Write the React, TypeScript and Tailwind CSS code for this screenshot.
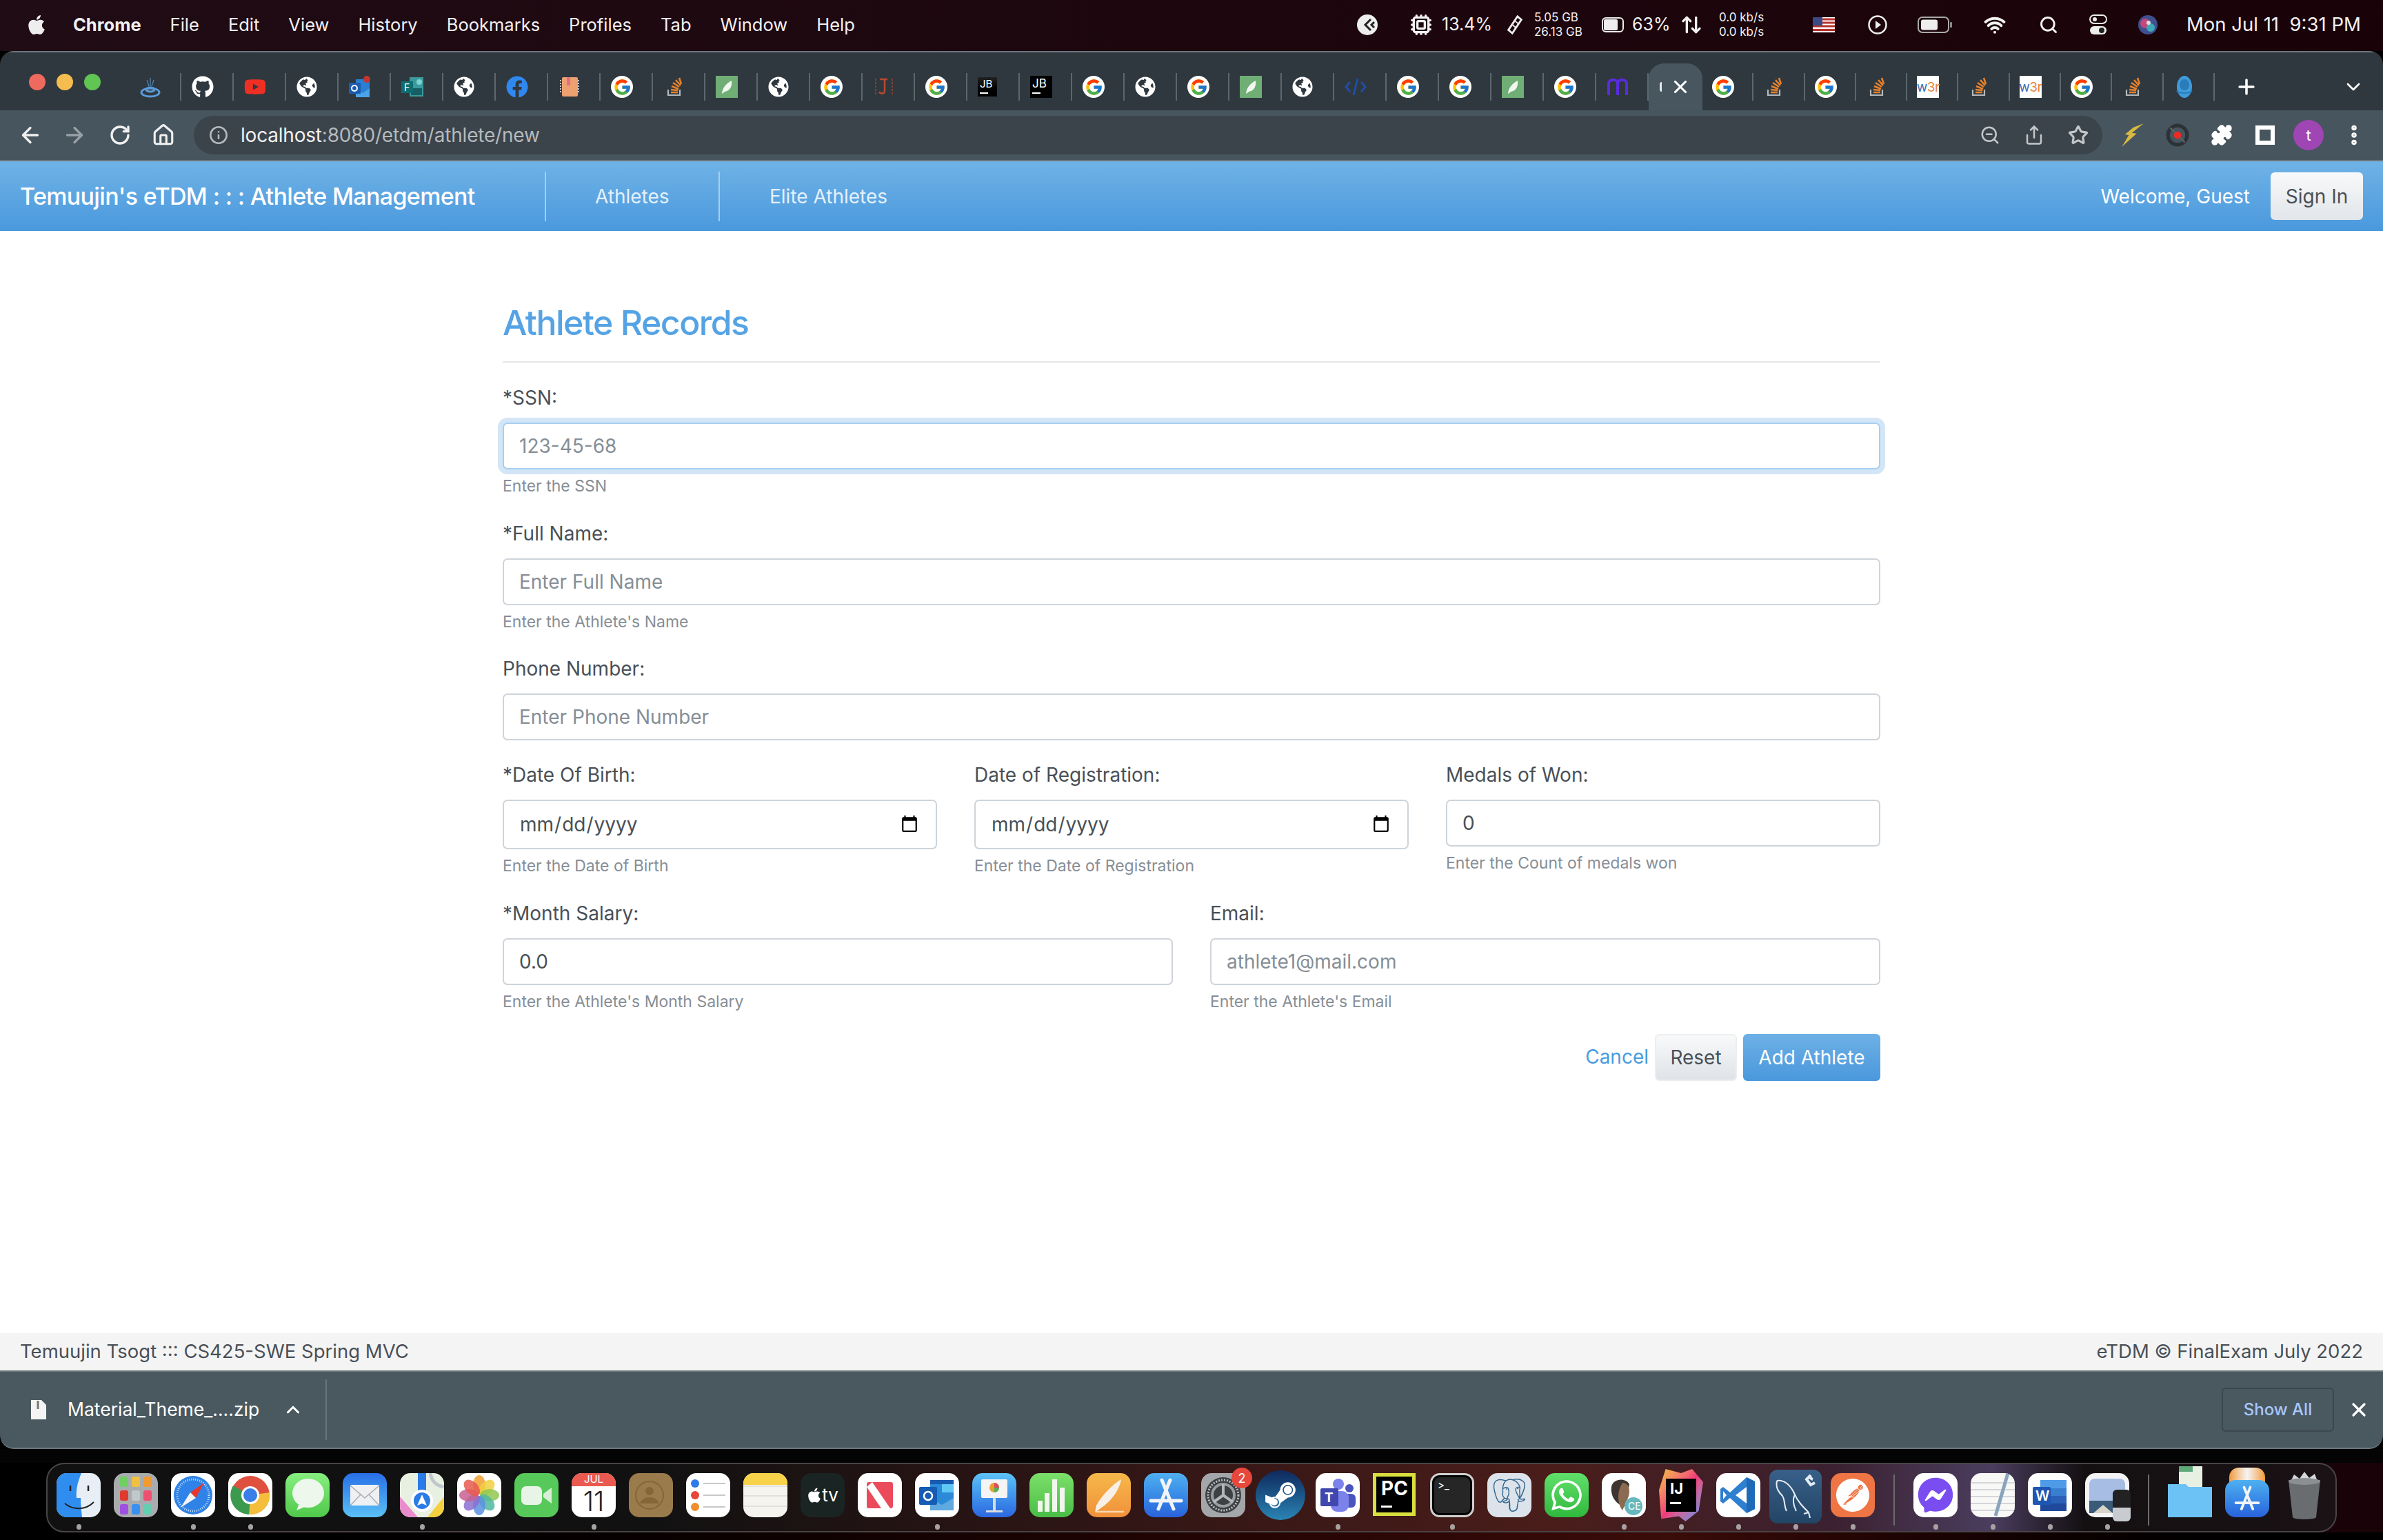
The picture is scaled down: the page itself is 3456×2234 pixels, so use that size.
import React from 'react'
import {
  ArrowLeft, ArrowRight, RotateCw, House, Info, ZoomOut, Share, Star, Puzzle, Plus, ChevronDown, ChevronUp,
  X, EllipsisVertical, Cpu, Wifi, Search, ArrowUpDown,
} from 'lucide-react'
import { FaApple, FaFacebook, FaFacebookMessenger, FaGithub, FaGlobeAmericas, FaSteamSymbol, FaWhatsapp, FaYoutube } from 'react-icons/fa'
import { FcGoogle } from 'react-icons/fc'
import { SiPostgresql, SiPostman } from 'react-icons/si'

const menuItems = ['File', 'Edit', 'View', 'History', 'Bookmarks', 'Profiles', 'Tab', 'Window', 'Help']

const tabsBefore = [
  'drop', 'github', 'youtube', 'globe', 'outlook', 'forms', 'globe', 'facebook', 'book', 'google', 'so', 'leaf', 'globe',
  'google', 'j', 'google', 'jbdim', 'jb', 'google', 'globe', 'google', 'leaf', 'globe', 'code', 'google', 'google', 'leaf',
  'google', 'm',
]
const tabsAfter = ['google', 'so', 'google', 'so', 'w3', 'so', 'w3', 'google', 'so', 'db']

const Leaf = () => (
  <svg viewBox="0 0 32 32" className="h-8 w-8">
    <rect width="32" height="32" fill="#6fae74" />
    <path d="M9 26c1-9 6-15 14-19 1 8-2 15-10 16-1 1-2 2-4 3z" fill="#f2f7f0" />
  </svg>
)

const StackOverflow = () => (
  <svg viewBox="0 0 32 32" className="h-8 w-8">
    <path d="M7 20v8h17v-8" fill="none" stroke="#b5b8ba" strokeWidth="2.2" />
    <path d="M11 24h10M11 20l10 1M12 15l10 4M14 10l9 6M18 6l7 8M23 3l3 9" stroke="#e5812b" strokeWidth="2.6" />
  </svg>
)

const W3 = () => (
  <span className="flex h-8 w-8 items-center justify-center bg-white text-[19px] leading-none tracking-tight">
    <span className="text-[#3b6fb5]">w</span>
    <span className="text-[#e8843c]">3r</span>
  </span>
)

const Favicon = ({ name }: { name: string }) => {
  if (name === 'google') {
    return (
      <span className="flex h-8 w-8 items-center justify-center rounded-full bg-white">
        <FcGoogle className="h-[27px] w-[27px]" />
      </span>
    )
  }
  if (name === 'globe') return <FaGlobeAmericas className="h-[30px] w-[30px] text-white" />
  if (name === 'github') return <FaGithub className="h-8 w-8 text-white" />
  if (name === 'youtube') return <FaYoutube className="h-8 w-8 text-[#ee3024]" />
  if (name === 'facebook') return <FaFacebook className="h-8 w-8 text-[#2f88f0]" />
  if (name === 'leaf') return <Leaf />
  if (name === 'so') return <StackOverflow />
  if (name === 'w3') return <W3 />
  if (name === 'drop') {
    return (
      <svg viewBox="0 0 32 32" className="h-8 w-8" fill="none" stroke="#5a9bd8" strokeWidth="2">
        <path d="M16 3v12M11 6l3 9M21 6l-3 9" strokeWidth="1" />
        <ellipse cx="16" cy="24" rx="13" ry="6" strokeWidth="3" />
        <ellipse cx="16" cy="20" rx="6" ry="3" strokeWidth="3" />
      </svg>
    )
  }
  if (name === 'outlook') {
    return (
      <svg viewBox="0 0 32 32" className="h-8 w-8">
        <rect x="10" y="5" width="20" height="26" fill="#2a7fd0" />
        <path d="M10 18l10 7 10-7v13H10z" fill="#4ba3e8" />
        <rect x="0" y="10" width="17" height="16" fill="#1a5cb0" />
        <circle cx="8" cy="18" r="4" fill="none" stroke="#fff" strokeWidth="2" />
        <circle cx="26" cy="5" r="5" fill="#c4352f" />
      </svg>
    )
  }
  if (name === 'forms') {
    return (
      <svg viewBox="0 0 32 32" className="h-8 w-8">
        <rect x="12" y="2" width="20" height="28" fill="#3b9a9e" />
        <circle cx="26" cy="9" r="4" fill="#7dd1cf" />
        <rect x="14" y="18" width="16" height="10" fill="#175e63" />
        <rect x="0" y="8" width="17" height="17" fill="#0e6d70" />
        <text x="4" y="22" fontSize="14" fontFamily="Inter" fill="#fff">F</text>
      </svg>
    )
  }
  if (name === 'book') {
    return (
      <svg viewBox="0 0 32 32" className="h-8 w-8">
        <rect x="5" y="2" width="23" height="28" rx="2" fill="#eda070" />
        <rect x="12" y="2" width="5" height="12" fill="#e76d8a" />
        <path d="M3 6v20M29 6v20" stroke="#c8c8c8" strokeWidth="2" strokeDasharray="2 2" />
      </svg>
    )
  }
  if (name === 'j') {
    return (
      <svg viewBox="0 0 32 32" className="h-8 w-8" fill="none" stroke="#b9492e" strokeWidth="2.5">
        <path d="M10 5h11M17 5v17c0 4-6 5-8 1" />
        <path d="M4 4v24M28 4v24" strokeWidth="1.2" strokeDasharray="3 2" />
      </svg>
    )
  }
  if (name === 'jb' || name === 'jbdim') {
    return (
      <span className={name === 'jb' ? 'flex h-8 w-8 flex-col bg-black pl-[3px] pt-[2px] text-[17px] leading-[18px] text-white' : 'flex h-[28px] w-[28px] flex-col bg-linear-to-b from-[#222] to-black pl-[3px] pt-[2px] text-[15px] leading-[16px] text-white'}>
        JB
        <span className="mt-[4px] h-[2px] w-[12px] bg-white" />
      </span>
    )
  }
  if (name === 'code') {
    return (
      <svg viewBox="0 0 32 32" className="h-8 w-8" fill="none" stroke="#1f4ea8" strokeWidth="3">
        <path d="M8 9l-6 7 6 7M24 9l6 7-6 7M19 4l-6 24" />
      </svg>
    )
  }
  if (name === 'm') {
    return (
      <svg viewBox="0 0 32 32" className="h-8 w-8" fill="none" stroke="#5a2be0" strokeWidth="4">
        <path d="M3 28V11c0-7 13-7 13 0v17M16 11c0-7 13-7 13 0v17" />
      </svg>
    )
  }
  return (
    <svg viewBox="0 0 32 32" className="h-8 w-8">
      <ellipse cx="16" cy="16" rx="11" ry="16" fill="#3f9bdc" />
      <ellipse cx="16" cy="13" rx="7" ry="8" fill="#2a7cb8" />
      <path d="M5 22c4 4 18 4 22 0" stroke="#2a7cb8" strokeWidth="2" fill="none" />
    </svg>
  )
}

const RamIcon = () => (
  <svg viewBox="0 0 24 32" className="h-[30px] w-[24px]" fill="none" stroke="#eee" strokeWidth="3">
    <path d="M16 3l6 5-14 21-6-5z" />
    <path d="M12 10l5 4M8 16l5 4" strokeWidth="2" />
  </svg>
)

const HalfBattery = () => (
  <svg viewBox="0 0 32 24" className="h-[26px] w-[32px]">
    <rect x="1" y="2" width="30" height="20" rx="5" fill="none" stroke="#eee" strokeWidth="2" />
    <rect x="3" y="4" width="20" height="16" rx="2" fill="#eee" />
  </svg>
)

const Flag = () => (
  <svg viewBox="0 0 32 22" className="h-[22px] w-[32px]">
    <rect width="32" height="22" fill="#fff" />
    <path d="M0 3h32M0 8h32M0 13h32M0 18.5h32" stroke="#b5342e" strokeWidth="3" />
    <rect width="14" height="12" fill="#3a4a85" />
  </svg>
)

const MenuBar = () => (
  <div className="flex h-[74px] shrink-0 items-center bg-linear-to-r from-[#200c15] to-[#1a0308] pb-[2px] text-[25.5px] text-[#f2f0f1]">
    <FaApple className="ml-[39px] h-[32px] w-[28px] text-[#eee]" />
    <span className="ml-[39px] font-bold">Chrome</span>
    {menuItems.map((item) => (
      <span key={item} className="ml-[42px]">{item}</span>
    ))}
    <div className="ml-auto flex items-center pr-[33px]">
      <svg viewBox="0 0 32 32" className="h-[32px] w-[32px]">
        <circle cx="16" cy="16" r="15" fill="#eee" />
        <path d="M21 8l-8 8 8 8M26 12l-4 4 4 4" fill="none" stroke="#222" strokeWidth="3" />
      </svg>
      <Cpu className="ml-[46px] h-[32px] w-[32px]" strokeWidth={2.5} />
      <span className="ml-[14px] w-[72px] text-[25px]">13.4%</span>
      <span className="ml-[22px]"><RamIcon /></span>
      <div className="ml-[16px] flex w-[78px] flex-col text-[17px] leading-[21px]">
        <span>5.05 GB</span>
        <span>26.13 GB</span>
      </div>
      <span className="ml-[20px]"><HalfBattery /></span>
      <span className="ml-[12px] w-[52px] text-[25px]">63%</span>
      <ArrowUpDown className="ml-[18px] h-[32px] w-[32px]" strokeWidth={2.5} />
      <div className="ml-[24px] flex w-[66px] flex-col text-[17px] leading-[21px]">
        <span>0.0 kb/s</span>
        <span>0.0 kb/s</span>
      </div>
      <span className="ml-[70px]"><Flag /></span>
      <svg viewBox="0 0 28 28" className="ml-[48px] h-[28px] w-[28px]">
        <circle cx="14" cy="14" r="12.5" fill="none" stroke="#eee" strokeWidth="2.5" />
        <path d="M11 8l8 6-8 6z" fill="#eee" />
      </svg>
      <svg viewBox="0 0 52 24" className="ml-[44px] h-[24px] w-[52px]">
        <rect x="1" y="1" width="44" height="22" rx="6" fill="none" stroke="#aaa" strokeWidth="2" />
        <rect x="5" y="4.5" width="24" height="15" rx="3" fill="#eee" />
        <rect x="47" y="8" width="3" height="8" rx="1" fill="#888" />
      </svg>
      <Wifi className="ml-[44px] h-[32px] w-[32px]" strokeWidth={3} />
      <Search className="ml-[48px] h-[28px] w-[28px]" strokeWidth={2.5} />
      <svg viewBox="0 0 28 32" className="ml-[44px] h-[32px] w-[28px]">
        <rect x="2" y="2" width="24" height="12" rx="6" fill="none" stroke="#eee" strokeWidth="2" />
        <circle cx="9" cy="8" r="3" fill="#eee" />
        <rect x="2" y="18" width="24" height="12" rx="6" fill="#eee" />
        <circle cx="19" cy="24" r="4" fill="#222" />
      </svg>
      <svg viewBox="0 0 28 28" className="ml-[44px] h-[28px] w-[28px]">
        <circle cx="14" cy="14" r="14" fill="#3f4f8f" />
        <circle cx="10" cy="12" r="7" fill="#c2487a" />
        <circle cx="18" cy="18" r="6" fill="#3fa8b8" />
        <circle cx="15" cy="11" r="3" fill="#ddd" />
      </svg>
      <span className="ml-[42px] w-[252px] whitespace-nowrap text-right text-[27.5px]">Mon Jul 11&nbsp;&nbsp;9:31 PM</span>
    </div>
  </div>
)

const TabStrip = () => (
  <div className="flex h-[86px] shrink-0 items-center border-t-2 border-[#6c777c] bg-[#30383f] pt-[30px] pb-[14px]">
    <div className="flex w-[187px] shrink-0 gap-[16px] pb-[14px] pl-[42px]">
      <span className="h-[24px] w-[24px] rounded-full bg-[#ee6a5f]" />
      <span className="h-[24px] w-[24px] rounded-full bg-[#f5bd4f]" />
      <span className="h-[24px] w-[24px] rounded-full bg-[#61c554]" />
    </div>
    {tabsBefore.map((name, i) => (
      <div key={i} className="flex h-[40px] w-[76px] items-center border-r-2 border-[#5c676e] pl-[15px]">
        <Favicon name={name} />
      </div>
    ))}
    <div className="mb-[-14px] flex h-[68px] w-[78px] shrink-0 items-center justify-end self-end rounded-t-[22px] bg-[#47565f] pr-[17px]">
      <span className="mr-[12px] h-[14px] w-[3px] rounded-l-full bg-[#e8e8e8]" />
      <X className="h-[30px] w-[30px] text-white" strokeWidth={2.5} />
    </div>
    {tabsAfter.map((name, i) => (
      <div key={i} className="flex h-[40px] w-[74.3px] items-center border-r-2 border-[#5c676e] pl-[14px]">
        <Favicon name={name} />
      </div>
    ))}
    <Plus className="ml-[29px] h-[34px] w-[34px] text-white" strokeWidth={2.5} />
    <ChevronDown className="ml-[122px] h-[32px] w-[32px] text-white" strokeWidth={2} />
  </div>
)

const Toolbar = () => (
  <div className="flex h-[74px] shrink-0 items-center border-b-2 border-[#6c777c] bg-[#47555e] text-[#f0f0f0]">
    <ArrowLeft className="ml-[26px] h-[36px] w-[36px]" strokeWidth={2.2} />
    <ArrowRight className="ml-[28px] h-[36px] w-[36px] text-[#98a1a7]" strokeWidth={2.2} />
    <RotateCw className="ml-[32px] h-[32px] w-[32px]" strokeWidth={2.5} />
    <House className="ml-[30px] h-[34px] w-[34px]" strokeWidth={2.2} />
    <div className="ml-[27px] flex h-[56px] w-[2768px] items-center rounded-full bg-[#3c444b] pr-[20px]">
      <Info className="ml-[22px] h-[28px] w-[28px] text-[#b4b9bd]" strokeWidth={2.2} />
      <span className="ml-[18px] text-[28px] tracking-[-0.2px]">
        localhost<span className="text-[#b4b9bd]">:8080/etdm/athlete/new</span>
      </span>
      <div className="ml-auto flex items-center gap-[34px] text-[#c3c7ca]">
        <ZoomOut className="h-[30px] w-[30px]" />
        <Share className="h-[30px] w-[30px]" />
        <Star className="h-[30px] w-[30px]" strokeWidth={2.5} />
      </div>
    </div>
    <svg viewBox="0 0 32 32" className="ml-[26px] h-[36px] w-[36px]">
      <path d="M30 1L15 13l6 1L2 31l9-15-5-1 11-9z" fill="#d8b840" />
    </svg>
    <svg viewBox="0 0 32 32" className="ml-[30px] h-[34px] w-[34px]">
      <circle cx="16" cy="16" r="13" fill="none" stroke="#2c3338" strokeWidth="5" />
      <path d="M6 6l20 20" stroke="#59636a" strokeWidth="2" />
      <circle cx="16" cy="16" r="5" fill="#ee2a24" />
    </svg>
    <Puzzle className="ml-[31px] h-[32px] w-[32px] fill-white text-white" />
    <div className="ml-[33px] h-[28px] w-[28px] border-[6px] border-white" />
    <div className="ml-[27px] flex h-[44px] w-[44px] items-center justify-center rounded-full bg-[#a046b4] text-[22px] text-white">t</div>
    <EllipsisVertical className="ml-[26px] h-[36px] w-[36px] text-white" strokeWidth={3} />
  </div>
)

const NavBar = () => (
  <div className="flex h-[101px] shrink-0 items-center bg-linear-to-b from-[#6fb3e6] to-[#4a98dd] text-[28px] text-white">
    <span className="ml-[29px] w-[761px] text-[34px] font-medium tracking-[-0.65px]">Temuujin's eTDM : : : Athlete Management</span>
    <span className="flex h-[72px] w-[254px] items-center border-x-2 border-[#a5cff0] pl-[71px] text-[#e4f0fb]">Athletes</span>
    <span className="ml-[72px] text-[#e4f0fb]">Elite Athletes</span>
    <span className="ml-auto">Welcome, Guest</span>
    <span className="ml-[30px] mr-[29px] flex h-[69px] w-[134px] items-center justify-center rounded-[6px] bg-linear-to-b from-[#f8f9fa] to-[#e2e6ea] text-[#495057]">Sign In</span>
  </div>
)

const labelClass = 'mb-[14px] block h-[43px] text-[28px] leading-[43px] text-[#495057]'
const helpClass = 'mt-[7px] block h-[34.5px] text-[23px] leading-[34.5px] text-[#868e96]'
const inputClass =
  'block h-[68px] w-full rounded-[7px] border-2 border-[#ced4da] bg-white px-[22px] text-[28px] text-[#495057] placeholder:text-[#868e96] outline-none'

type FieldProps = {
  label: string
  help?: string
  placeholder?: string
  value?: string
  type?: string
}

const Field = ({ label, help, placeholder, value, type }: FieldProps) => (
  <div>
    <label className={labelClass}>{label}</label>
    {type === 'date' ? (
      <input type="date" className={inputClass + ' !h-[72px]'} />
    ) : (
      <input type="text" readOnly placeholder={placeholder} defaultValue={value} className={inputClass} />
    )}
    {help && <small className={helpClass}>{help}</small>}
  </div>
)

const AthleteForm = () => (
  <main className="flex-1 bg-white pt-[103px]">
    <div className="mx-auto w-[1998px]">
      <h3 className="h-[88px] border-b-2 border-[#e6e7e8] text-[50px] font-medium leading-[60px] tracking-[-1.5px] text-[#55a3e4]">Athlete Records</h3>
      <div className="mt-[30px]">
        <label className={labelClass}>*SSN:</label>
        <input
          type="text"
          readOnly
          placeholder="123-45-68"
          className="block h-[68px] w-full rounded-[7px] border-2 border-[#a9cfef] bg-white px-[22px] text-[28px] shadow-[0_0_0_7px_#d3e6f7] outline-none placeholder:text-[#868e96]"
        />
        <small className={helpClass}>Enter the SSN</small>
      </div>
      <div className="mt-[30px]">
        <Field label="*Full Name:" placeholder="Enter Full Name" help="Enter the Athlete's Name" />
      </div>
      <div className="mt-[30px]">
        <Field label="Phone Number:" placeholder="Enter Phone Number" />
      </div>
      <div className="mt-[29px] grid grid-cols-3 gap-x-[54px]">
        <Field label="*Date Of Birth:" type="date" help="Enter the Date of Birth" />
        <Field label="Date of Registration:" type="date" help="Enter the Date of Registration" />
        <Field label="Medals of Won:" value="0" help="Enter the Count of medals won" />
      </div>
      <div className="mt-[30px] grid grid-cols-2 gap-x-[54px]">
        <Field label="*Month Salary:" value="0.0" help="Enter the Athlete's Month Salary" />
        <Field label="Email:" placeholder="athlete1@mail.com" help="Enter the Athlete's Email" />
      </div>
      <div className="mt-[30px] flex items-center justify-end text-[28px]">
        <a className="mb-[2px] text-[#4a9be0]">Cancel</a>
        <button className="ml-[9px] h-[68px] w-[119px] rounded-[6px] border-2 border-[#eceef0] bg-linear-to-b from-[#f8f9fa] to-[#dfe3e7] text-[#495057]">Reset</button>
        <button className="ml-[9px] h-[68px] w-[199px] rounded-[6px] bg-linear-to-b from-[#6db0e6] to-[#4a98dc] text-white">Add Athlete</button>
      </div>
    </div>
  </main>
)

const Footer = () => (
  <div className="flex h-[54px] shrink-0 items-center justify-between bg-[#f4f4f4] px-[29px] text-[27.5px] text-[#495057]">
    <span>Temuujin Tsogt ::: CS425-SWE Spring MVC</span>
    <span>eTDM © FinalExam July 2022</span>
  </div>
)

const DownloadBar = () => (
  <div className="flex h-[114px] shrink-0 items-center rounded-b-[20px] border-y-2 border-[#6c777c] bg-[#4a5860] text-white">
    <svg viewBox="0 0 22 30" className="ml-[45px] h-[30px] w-[22px]">
      <path d="M0 1h15l7 7v21H0z" fill="#f4f4f4" />
      <path d="M10 2v12" stroke="#777" strokeWidth="3" />
    </svg>
    <span className="ml-[31px] w-[324px] text-[26.5px]">Material_Theme_....zip</span>
    <ChevronUp className="-ml-[12px] h-[30px] w-[30px]" strokeWidth={2.5} />
    <div className="ml-[32px] h-[88px] w-[2px] bg-[#67747b]" />
    <button className="ml-auto h-[64px] w-[163px] rounded-[6px] border-2 border-[#3c474f] text-[24px] font-medium text-[#a8c7fa]">Show All</button>
    <X className="ml-[20px] mr-[19px] h-[32px] w-[32px]" strokeWidth={2.5} />
  </div>
)

const Tile = ({ bg, children }: { bg: string; children?: React.ReactNode }) => (
  <div className={'relative flex h-[64px] w-[64px] items-center justify-center overflow-hidden rounded-[15px] ' + bg}>{children}</div>
)

const S = ({ children }: { children: React.ReactNode }) => (
  <svg viewBox="0 0 64 64" className="h-[64px] w-[64px]">{children}</svg>
)

type DockItem = { key: string; dot?: boolean; el: React.ReactNode }

const dockGroup1: DockItem[] = [
  { key: 'finder', dot: true, el: (
    <Tile bg="bg-[#e8eef5]">
      <S>
        <path d="M0 0h36c-6 14-8 26-7 36h6c0 10 1 18 2 28H0z" fill="#2f8df0" />
        <path d="M20 18v8M46 18v8" stroke="#222" strokeWidth="2.5" />
        <path d="M12 44c12 10 30 10 42-2" fill="none" stroke="#222" strokeWidth="2" />
      </S>
    </Tile>
  ) },
  { key: 'launchpad', el: (
    <Tile bg="bg-[#a9acaf]">
      <div className="grid grid-cols-3 gap-[5px]">
        {['bg-[#6fd060]', 'bg-[#f0c040]', 'bg-[#f09a30]', 'bg-[#e03a30]', 'bg-[#c0c8cc]', 'bg-[#f05070]', 'bg-[#a050e0]', 'bg-[#3a90f0]', 'bg-[#60d0b0]'].map((c) => (
          <span key={c} className={'h-[15px] w-[12px] rounded-[3px] ' + c} />
        ))}
      </div>
    </Tile>
  ) },
  { key: 'safari', dot: true, el: (
    <Tile bg="bg-white">
      <S>
        <circle cx="32" cy="32" r="28" fill="#2f83e8" />
        <circle cx="32" cy="32" r="23" fill="none" stroke="#cfe4fb" strokeWidth="3" strokeDasharray="1 2" />
        <path d="M48 14L28 28l8 8z" fill="#e8362e" />
        <path d="M14 50l14-22 8 8z" fill="#f4f4f4" />
      </S>
    </Tile>
  ) },
  { key: 'chrome', dot: true, el: (
    <Tile bg="bg-white">
      <S>
        <circle cx="32" cy="32" r="28" fill="#e0503f" />
        <path d="M32 32L60 28a28 28 0 0 1-30 32z" fill="#f4bd3a" />
        <path d="M32 32L30 60A28 28 0 0 1 7 18z" fill="#3c9a4f" />
        <circle cx="32" cy="32" r="13" fill="#fff" />
        <circle cx="32" cy="32" r="10" fill="#3a7ee8" />
      </S>
    </Tile>
  ) },
  { key: 'messages', el: (
    <Tile bg="bg-linear-to-b from-[#86ef7f] to-[#4fc94a]">
      <S>
        <ellipse cx="33" cy="29" rx="23" ry="21" fill="#eef7ec" />
        <path d="M20 44l-4 10 14-6z" fill="#eef7ec" />
      </S>
    </Tile>
  ) },
  { key: 'mail', el: (
    <Tile bg="bg-linear-to-b from-[#2a6fe8] to-[#5cc0f5]">
      <S>
        <rect x="11" y="17" width="42" height="30" rx="2" fill="#eef0f2" />
        <path d="M11 18l21 18 21-18M11 47l15-16M53 47L38 31" fill="none" stroke="#a8adb2" strokeWidth="1.5" />
      </S>
    </Tile>
  ) },
  { key: 'maps', dot: true, el: (
    <Tile bg="bg-[#e8f0e2]">
      <S>
        <path d="M0 34l26 30H0z" fill="#e88ccc" />
        <path d="M40 64l24-30v30z" fill="#f4d040" />
        <rect x="26" y="0" width="12" height="30" fill="#2a7ae8" />
        <path d="M44 0c2 12 8 18 20 20" fill="none" stroke="#c0c6cc" strokeWidth="5" />
        <circle cx="32" cy="40" r="16" fill="#fff" />
        <circle cx="32" cy="40" r="12" fill="#2a7ae8" />
        <path d="M32 31l7 16-7-3-7 3z" fill="#fff" />
      </S>
    </Tile>
  ) },
  { key: 'photos', el: (
    <Tile bg="bg-white">
      <S>
        {[['#f0a030', 0], ['#f0d040', 45], ['#90c850', 90], ['#50b8a0', 135], ['#5a90e0', 180], ['#8a70d0', 225], ['#c86090', 270], ['#e85a50', 315]].map(([c, r]) => (
          <ellipse key={String(r)} cx="32" cy="17" rx="9" ry="14" fill={String(c)} opacity="0.85" transform={'rotate(' + r + ' 32 32)'} />
        ))}
      </S>
    </Tile>
  ) },
  { key: 'facetime', el: (
    <Tile bg="bg-[#57c95a]">
      <S>
        <rect x="10" y="19" width="30" height="27" rx="7" fill="#e8f5e6" />
        <path d="M42 30l12-9v23l-12-9z" fill="#d8eed6" />
      </S>
    </Tile>
  ) },
  { key: 'calendar', dot: true, el: (
    <Tile bg="bg-white">
      <div className="flex h-full w-full flex-col items-center">
        <span className="flex h-[19px] w-full items-center justify-center bg-[#ea5a50] text-[15px] text-white">JUL</span>
        <span className="text-[39px] font-light leading-[44px] text-[#222]">11</span>
      </div>
    </Tile>
  ) },
  { key: 'contacts', el: (
    <Tile bg="bg-[#9a7b4c]">
      <S>
        <circle cx="30" cy="32" r="20" fill="none" stroke="#846638" strokeWidth="2" />
        <circle cx="30" cy="26" r="6" fill="#846638" />
        <path d="M16 44c4-12 24-12 28 0" fill="#846638" />
      </S>
    </Tile>
  ) },
  { key: 'reminders', el: (
    <Tile bg="bg-white">
      <S>
        <circle cx="13" cy="15" r="6" fill="#2f7be8" />
        <circle cx="13" cy="32" r="6" fill="#e8443a" />
        <circle cx="13" cy="49" r="6" fill="#ef8e2a" />
        <path d="M25 15h32M25 32h32M25 49h32" stroke="#c8c8c8" strokeWidth="2" />
      </S>
    </Tile>
  ) },
  { key: 'notes', el: (
    <Tile bg="bg-[#f5f4ef]">
      <S>
        <rect width="64" height="17" fill="#f8d34a" />
        <path d="M0 19h64M0 33h64M0 48h64" stroke="#dcdbd4" strokeWidth="1.5" />
      </S>
    </Tile>
  ) },
  { key: 'tv', el: (
    <Tile bg="bg-[#1a2423]">
      <FaApple className="h-[24px] w-[22px] text-white" />
      <span className="text-[26px] leading-none text-white">tv</span>
    </Tile>
  ) },
  { key: 'news', el: (
    <Tile bg="bg-white">
      <S>
        <rect x="13" y="13" width="38" height="38" rx="3" fill="#ea4a5c" />
        <path d="M21 13l26 38H34L13 20z" fill="#fff" />
      </S>
    </Tile>
  ) },
  { key: 'outlook', dot: true, el: (
    <Tile bg="bg-white">
      <S>
        <rect x="22" y="10" width="34" height="44" fill="#2a8ad8" />
        <rect x="39" y="10" width="17" height="18" fill="#60c8f5" />
        <rect x="22" y="10" width="34" height="6" fill="#1a5ab0" />
        <path d="M22 36l17 10 17-10v18H22z" fill="#60a8e0" />
        <rect x="6" y="20" width="26" height="26" rx="2" fill="#155cb4" />
        <circle cx="19" cy="33" r="6" fill="none" stroke="#fff" strokeWidth="2.5" />
      </S>
    </Tile>
  ) },
  { key: 'keynote', el: (
    <Tile bg="bg-linear-to-b from-[#5dc2f8] to-[#2d66e0]">
      <S>
        <path d="M30 34h4v20h-4zM20 54h24v3H20z" fill="#d8dde2" />
        <rect x="13" y="9" width="38" height="27" rx="2" fill="#f4f4f4" />
        <circle cx="32" cy="21" r="7" fill="#e8a030" />
        <path d="M32 21V14a7 7 0 0 1 7 7z" fill="#e04a5a" />
        <path d="M32 21h7a7 7 0 0 1-7 7z" fill="#50b060" />
      </S>
    </Tile>
  ) },
  { key: 'numbers', el: (
    <Tile bg="bg-linear-to-b from-[#7be06a] to-[#49bd47]">
      <S>
        <rect x="12" y="40" width="7" height="16" fill="#f2f7ee" />
        <rect x="22" y="29" width="7" height="27" fill="#f2f7ee" />
        <rect x="33" y="9" width="7" height="47" fill="#f2f7ee" />
        <rect x="44" y="21" width="7" height="35" fill="#f2f7ee" />
      </S>
    </Tile>
  ) },
  { key: 'pages', el: (
    <Tile bg="bg-linear-to-b from-[#f6b84a] to-[#f0913a]">
      <S>
        <path d="M50 9c-2 14-14 32-30 42l-8 6 2-10C22 32 38 16 50 9z" fill="#f8f0e6" />
        <path d="M14 56h40" stroke="#f8d8b0" strokeWidth="2.5" />
      </S>
    </Tile>
  ) },
  { key: 'appstore', el: (
    <Tile bg="bg-linear-to-b from-[#4fb0f0] to-[#2a62dc]">
      <S>
        <path d="M26 10l17 42M38 10L21 52M10 40h44" stroke="#f0f4f8" strokeWidth="5" strokeLinecap="round" />
      </S>
    </Tile>
  ) },
]

const dockGroup2: DockItem[] = [
  { key: 'settings', el: (
    <div className="relative">
      <Tile bg="bg-[#a4a7aa]">
        <S>
          <circle cx="32" cy="32" r="26" fill="#3e4144" />
          <circle cx="32" cy="32" r="22" fill="none" stroke="#bfc2c5" strokeWidth="3" strokeDasharray="2 2" />
          <circle cx="32" cy="32" r="16" fill="none" stroke="#9a9da0" strokeWidth="4" />
          <path d="M32 16v16M18 42l14-10M46 42L32 32" stroke="#b4b7ba" strokeWidth="4" />
        </S>
      </Tile>
      <span className="absolute -right-[10px] -top-[8px] flex h-[30px] w-[30px] items-center justify-center rounded-full bg-[#e8483c] text-[18px] text-white">2</span>
    </div>
  ) },
  { key: 'steam', el: (
    <div className="flex h-[64px] w-[64px] items-center justify-center">
      <div className="flex h-[72px] w-[72px] shrink-0 items-center justify-center rounded-full bg-linear-to-b from-[#102a5e] to-[#2a85b5]">
        <FaSteamSymbol className="h-[50px] w-[50px] text-white" />
      </div>
    </div>
  ) },
  { key: 'teams', dot: true, el: (
    <Tile bg="bg-white">
      <S>
        <circle cx="49" cy="22" r="6" fill="#4b53bc" />
        <circle cx="33" cy="16" r="8" fill="#7b83eb" />
        <rect x="40" y="30" width="18" height="20" rx="6" fill="#4b53bc" />
        <rect x="22" y="26" width="26" height="30" rx="9" fill="#7b83eb" />
        <rect x="7" y="22" width="26" height="26" rx="2" fill="#4048b0" />
        <text x="13" y="42" fontSize="19" fontFamily="Inter" fontWeight="700" fill="#fff">T</text>
      </S>
    </Tile>
  ) },
  { key: 'pycharm', el: (
    <div className="flex h-[62px] w-[62px] flex-col border-[5px] border-[#d8e040] bg-black pl-[7px] pt-[2px] text-[28px] font-bold leading-[30px] text-white">
      PC
      <span className="mt-[10px] h-[3px] w-[16px] bg-white" />
    </div>
  ) },
  { key: 'terminal', dot: true, el: (
    <div className="flex h-[64px] w-[64px] rounded-[14px] border-[3px] border-[#d0d0d0] bg-black p-[3px]">
      <div className="h-full w-full rounded-[8px] bg-[#262626] pl-[5px] text-[15px] leading-[24px] text-white">&gt;_</div>
    </div>
  ) },
  { key: 'postgres', el: (
    <Tile bg="bg-[#dde3ea]">
      <SiPostgresql className="h-[48px] w-[48px] text-[#336791]" />
    </Tile>
  ) },
  { key: 'whatsapp', el: (
    <Tile bg="bg-linear-to-b from-[#60e06a] to-[#2fb83e]">
      <FaWhatsapp className="h-[50px] w-[50px] text-white" />
    </Tile>
  ) },
  { key: 'dbeaver', dot: true, el: (
    <Tile bg="bg-white">
      <S>
        <path d="M14 20c2-12 20-14 26-4l-6 32c-8 0-22-10-20-28z" fill="#3e3530" />
        <path d="M30 14c10 0 12 12 8 22l-8 18c-8-10-8-28 0-40z" fill="#8a6a50" />
        <circle cx="46" cy="48" r="13" fill="#66b8bd" />
        <text x="38" y="53" fontSize="14" fontFamily="Inter" fill="#fff">CE</text>
      </S>
    </Tile>
  ) },
  { key: 'idea', dot: true, el: (
    <div className="relative flex h-[64px] w-[64px] items-center justify-center">
      <div className="absolute -inset-y-[6px] inset-x-0 bg-linear-to-br from-[#f0c030] via-[#f0387a] to-[#2a8ff0] [clip-path:polygon(15%_0,50%_8%,75%_0,100%_25%,90%_80%,60%_100%,45%_90%,5%_95%,0_40%)]" />
      <div className="relative flex h-[48px] w-[44px] flex-col bg-black pl-[6px] text-[22px] font-bold leading-[28px] text-white">
        IJ
        <span className="mt-[6px] h-[3px] w-[16px] bg-white" />
      </div>
    </div>
  ) },
  { key: 'vscode', dot: true, el: (
    <Tile bg="bg-white">
      <S>
        <path d="M44 6l12 6v40l-12 6-24-22-10 8-4-3V23l4-3 10 8z" fill="#2f7fd0" />
        <path d="M44 6l12 6v40l-12 6z" fill="#1f6ab8" />
        <path d="M44 20L28 32l16 12z" fill="#fff" />
        <path d="M10 26l5 6-5 6z" fill="#fff" />
      </S>
    </Tile>
  ) },
  { key: 'workbench', dot: true, el: (
    <div className="-mx-[6px] -my-[5px] flex h-[78px] w-[76px] items-center justify-center rounded-[12px] bg-linear-to-b from-[#38608a] to-[#234565]">
      <svg viewBox="0 0 76 78" className="h-[78px] w-[76px]" fill="none" stroke="#e4edf4" strokeWidth="2">
        <path d="M11 16c10-2 20 6 26 20 4 10 12 18 20 26" />
        <path d="M11 16c-2 10 2 16 8 22 4 6 2 14 6 22" />
        <path d="M37 36c-4 8-2 16 2 24M57 62l2 8M57 62l-7 2" />
        <path d="M60 8l-6 6 6 8 6-3M60 8c-2 3 0 5 3 6" strokeWidth="4" />
      </svg>
    </div>
  ) },
  { key: 'postman', dot: true, el: (
    <Tile bg="bg-[#ef7545]">
      <SiPostman className="h-[48px] w-[48px] text-white" />
    </Tile>
  ) },
]

const dockGroup3: DockItem[] = [
  { key: 'messenger', dot: true, el: (
    <Tile bg="bg-white">
      <FaFacebookMessenger className="h-[52px] w-[52px] text-[#7a4df0]" />
    </Tile>
  ) },
  { key: 'textedit', dot: true, el: (
    <Tile bg="bg-[#f8f8f6]">
      <S>
        <path d="M0 14h64M0 24h64M0 34h64M0 44h64M0 54h64" stroke="#c9c9cf" strokeWidth="1.5" />
        <path d="M54 0L36 62" stroke="#8aa4bc" strokeWidth="5" />
      </S>
    </Tile>
  ) },
  { key: 'word', dot: true, el: (
    <Tile bg="bg-white">
      <S>
        <rect x="18" y="10" width="38" height="12" fill="#4f9be8" />
        <rect x="18" y="22" width="38" height="11" fill="#3a7ed0" />
        <rect x="18" y="33" width="38" height="11" fill="#2a60b8" />
        <rect x="18" y="44" width="38" height="11" fill="#1f4a9c" />
        <rect x="7" y="20" width="26" height="26" rx="2" fill="#1f56b4" />
        <text x="11" y="40" fontSize="20" fontFamily="Inter" fontWeight="600" fill="#fff">W</text>
      </S>
    </Tile>
  ) },
  { key: 'preview', dot: true, el: (
    <div className="relative">
      <Tile bg="bg-[#f4f4f4]">
        <S>
          <rect x="6" y="8" width="52" height="50" rx="8" fill="#a8bde4" />
          <path d="M6 40h52v18H6z" fill="#3a5a78" />
          <path d="M12 58l14-12 14 12z" fill="#d8d4c8" />
        </S>
      </Tile>
      <span className="absolute -right-[2px] top-[24px] h-[26px] w-[26px] rounded-t-[6px] bg-[#222]" />
      <span className="absolute -right-[2px] top-[50px] h-[20px] w-[26px] rounded-b-[6px] bg-[#c8ccd0]" />
    </div>
  ) },
]

const dockGroup4: DockItem[] = [
  { key: 'folder', el: (
    <svg viewBox="0 0 64 64" className="h-[64px] w-[64px] overflow-visible">
      <rect x="16" y="-10" width="34" height="34" fill="#e8f0e4" />
      <rect x="16" y="-10" width="20" height="8" fill="#5fa878" />
      <path d="M0 16h26l4 4h34v44H0z" fill="#6cc2f4" />
    </svg>
  ) },
  { key: 'downloads', el: (
    <div className="relative h-[64px] w-[64px]">
      <div className="absolute left-[6px] -top-[8px] h-[24px] w-[52px] rounded-t-[14px] bg-linear-to-r from-[#ef9a30] via-[#f4f4f4] to-[#ef9a30]" />
      <div className="absolute inset-x-0 top-[10px] bottom-0">
        <Tile bg="!h-[54px] bg-linear-to-b from-[#4fb0f0] to-[#2a62dc]">
          <svg viewBox="0 0 64 64" className="h-[48px] w-[48px]">
            <path d="M26 10l17 42M38 10L21 52M10 40h44" stroke="#f0f4f8" strokeWidth="5" strokeLinecap="round" />
          </svg>
        </Tile>
      </div>
    </div>
  ) },
  { key: 'trash', el: (
    <svg viewBox="0 0 64 72" className="-mt-[2px] h-[72px] w-[64px]">
      <path d="M9 12l6 54c1 4 33 4 34 0l6-54z" fill="#6a6d70" />
      <path d="M12 14l5-10 8 6 7-10 7 9 8-6 4 11z" fill="#d4d6d8" />
      <ellipse cx="32" cy="14" rx="23" ry="5" fill="#8c8f92" />
    </svg>
  ) },
]

const DockTile = ({ item }: { item: DockItem }) => (
  <div className="flex h-[86px] w-[64px] shrink-0 flex-col items-center">
    <div className="h-[64px] w-[64px]">{item.el}</div>
    {item.dot && <span className="mt-[10px] h-[8px] w-[7px] rounded-full bg-[#a7a1a1]" />}
  </div>
)

const DockSep = () => <div className="mx-[8px] mt-[2px] h-[74px] w-[2px] shrink-0 bg-[#6f6a6c]" />

const Dock = () => (
  <div className="flex h-[132px] shrink-0 flex-col">
    <div className="h-[20px] shrink-0 bg-[#040404]" />
    <div className="h-[101px] shrink-0 bg-linear-to-r from-black via-[#2a0808] via-60% to-[#180309] pl-[67px]">
      <div className="flex h-[101px] w-[3322px] gap-[19px] rounded-[26px] border-2 border-[#4a4446] bg-[linear-gradient(to_right,#111_0%,#111_26%,#2a1414_42%,#4a1d1a_66%,#3b2130_78%,#4a3d5e_85%,#141012_89%,#1a1214_100%)] pl-[13px] pt-[13px]">
        {dockGroup1.map((item) => (
          <DockTile key={item.key} item={item} />
        ))}
        {dockGroup2.map((item) => (
          <DockTile key={item.key} item={item} />
        ))}
        <DockSep />
        {dockGroup3.map((item) => (
          <DockTile key={item.key} item={item} />
        ))}
        <DockSep />
        {dockGroup4.map((item) => (
          <DockTile key={item.key} item={item} />
        ))}
      </div>
    </div>
    <div className="h-[11px] shrink-0 bg-linear-to-r from-black via-[#3a0c0a] via-70% to-black" />
  </div>
)

const App = () => {
  return (
    <div className="flex h-[2234px] w-[3456px] flex-col overflow-hidden bg-black font-['Inter',sans-serif]">
      <MenuBar />
      <div className="flex h-[2028px] shrink-0 flex-col overflow-hidden rounded-[20px]">
        <TabStrip />
        <Toolbar />
        <NavBar />
        <AthleteForm />
        <Footer />
        <DownloadBar />
      </div>
      <Dock />
    </div>
  )
}

export default App
